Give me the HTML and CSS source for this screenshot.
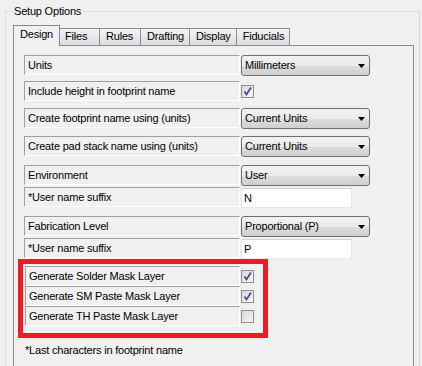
FILE: index.html
```html
<!DOCTYPE html>
<html lang="en">

<head>
    <title>Setup Options</title>
    <link rel="stylesheet" href="styles.css">
</head>

<body>
    <!--Setup options group box-->
    <fieldset class="group">
        <legend>Setup Options</legend>

        <!--Tab strip-->
        <div class="tabs">
            <div class="tab active">Design</div>
            <div class="tab">Files</div>
            <div class="tab">Rules</div>
            <div class="tab">Drafting</div>
            <div class="tab">Display</div>
            <div class="tab">Fiducials</div>
        </div>

        <!--Design tab page-->
        <div class="panel">
            <div class="row">
                <div class="label">Units</div>
                <div class="combo">Millimeters<svg class="arrow" width="7" height="4"><polygon points="0,0 7,0 3.5,4" /></svg></div>
            </div>
            <div class="row sp5">
                <div class="label">Include height in footprint name</div>
                <div class="check"><svg width="11" height="11"><polyline points="2.5,5.5 4.5,8.5 9,1.5" /></svg></div>
            </div>
            <div class="row sp7">
                <div class="label">Create footprint name using (units)</div>
                <div class="combo">Current Units<svg class="arrow" width="7" height="4"><polygon points="0,0 7,0 3.5,4" /></svg></div>
            </div>
            <div class="row sp7">
                <div class="label">Create pad stack name using (units)</div>
                <div class="combo">Current Units<svg class="arrow" width="7" height="4"><polygon points="0,0 7,0 3.5,4" /></svg></div>
            </div>
            <div class="row sp8">
                <div class="label">Environment</div>
                <div class="combo">User<svg class="arrow" width="7" height="4"><polygon points="0,0 7,0 3.5,4" /></svg></div>
            </div>
            <div class="row sp1">
                <div class="label">*User name suffix</div>
                <div class="textbox">N</div>
            </div>
            <div class="row sp8">
                <div class="label">Fabrication Level</div>
                <div class="combo">Proportional (P)<svg class="arrow" width="7" height="4"><polygon points="0,0 7,0 3.5,4" /></svg></div>
            </div>
            <div class="row sp1">
                <div class="label">*User name suffix</div>
                <div class="textbox">P</div>
            </div>

            <!--Highlighted mask layer options-->
            <div class="highlight">
                <div class="row">
                    <div class="label">Generate Solder Mask Layer</div>
                    <div class="check"><svg width="11" height="11"><polyline points="2.5,5.5 4.5,8.5 9,1.5" /></svg></div>
                </div>
                <div class="row">
                    <div class="label">Generate SM Paste Mask Layer</div>
                    <div class="check"><svg width="11" height="11"><polyline points="2.5,5.5 4.5,8.5 9,1.5" /></svg></div>
                </div>
                <div class="row">
                    <div class="label">Generate TH Paste Mask Layer</div>
                    <div class="check"></div>
                </div>
            </div>

            <div class="note">*Last characters in footprint name</div>
        </div>
    </fieldset>
</body>

</html>
```

FILE: styles.css
```css
/*global styling*/
* {
    box-sizing: border-box;
    font-family: "Liberation Sans", Arial, sans-serif;
    font-size: 11px;
    letter-spacing: -0.2px;
}

html,
body {
    overflow: hidden;
}

body {
    margin: 0;
    padding: 0;
    background-color: #f0f0f0;
    color: #000;
}

/*group box*/
.group {
    margin: 5px 2px 0 5px;
    padding: 7px 5px 0 7px;
    border: 1px solid #d5dfe5;
    min-width: 0;
}

.group legend {
    padding: 0 1px;
    line-height: 13px;
}

/*tab strip*/
.tabs {
    display: flex;
    align-items: flex-end;
    height: 20px;
}

.tab {
    height: 17px;
    min-width: 42px;
    padding: 1px 5px 0 6px;
    line-height: 13px;
    border: 1px solid #898c95;
    border-bottom: none;
    margin-right: -1px;
    background: linear-gradient(#f3f3f3, #e8e8e8 50%, #dcdcdc);
}

.tab.active {
    position: relative;
    z-index: 1;
    height: 21px;
    padding: 2px 6px 0 6px;
    margin-bottom: -1px;
    margin-right: -2px;
    background: #f0f0f0;
}

/*tab page*/
.panel {
    border: 1px solid #898c95;
    padding: 9px 10px 40px 10px;
    display: flex;
    flex-direction: column;
}

/*one label + control line*/
.row {
    display: flex;
    align-items: flex-start;
    gap: 1px;
}

.sp1 { margin-top: 1px; }
.sp5 { margin-top: 5px; }
.sp7 { margin-top: 7px; }
.sp8 { margin-top: 8px; }

/*sunken label cell*/
.label {
    width: 216px;
    height: 20px;
    padding-left: 3px;
    line-height: 18px;
    border-style: solid;
    border-width: 1px;
    border-color: #a0a0a0 #ffffff #ffffff #a0a0a0;
    white-space: nowrap;
}

/*drop down list*/
.combo {
    width: 129px;
    height: 21px;
    padding-left: 3px;
    line-height: 19px;
    border: 1px solid #707070;
    border-radius: 3px;
    background: linear-gradient(#f2f2f2, #ebebeb 50%, #dddddd 51%, #cfcfcf);
    display: flex;
    white-space: nowrap;
}

.combo .arrow {
    margin: 8px 4px 0 auto;
}

.combo .arrow polygon {
    fill: #000;
}

/*text box*/
.textbox {
    width: 111px;
    height: 20px;
    margin-top: 1px;
    padding-left: 2px;
    line-height: 18px;
    background-color: #fff;
    border: 1px solid #e3e9ef;
    border-top-color: #d0d4dc;
}

/*check box*/
.check {
    width: 13px;
    height: 13px;
    margin-top: 4px;
    border: 1px solid #8e8f8f;
    background: linear-gradient(135deg, #d8d8d8, #f6f6f6);
}

.check svg {
    display: block;
}

.check polyline {
    fill: none;
    stroke: #3d4f8f;
    stroke-width: 1.7;
}

/*red annotation box*/
.highlight {
    width: 250px;
    margin-left: -6px;
    padding: 2px 0 7px 2px;
    border: 5px solid #ed1c24;
}

.highlight .label {
    width: 215px;
}

.note {
    margin-top: 6px;
    padding-left: 1px;
    line-height: 13px;
}
```
